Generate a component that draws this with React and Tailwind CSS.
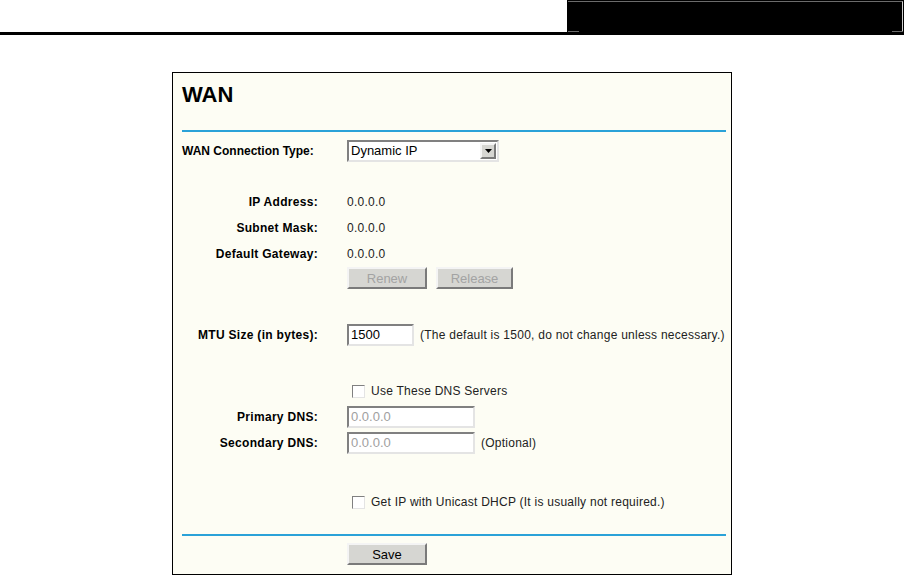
import React from 'react'

const inset =
  'border-2 border-t-[#808080] border-l-[#808080] border-r-[#e4e4e4] border-b-[#e4e4e4] bg-white'

const Label = ({ children, left = false }) => (
  <div
    className={`w-[136px] shrink-0 whitespace-nowrap font-bold text-black ${
      left ? 'text-left tracking-normal' : 'text-right tracking-[0.3px]'
    }`}
  >
    {children}
  </div>
)

const Row = ({ label, left, children, className = 'h-[26px]' }) => (
  <div className={`flex items-center ${className}`}>
    <Label left={left}>{label}</Label>
    <div className="ml-[29px] flex items-center">{children}</div>
  </div>
)

const Button = ({ children, disabled, width }) => (
  <button
    type="button"
    className={`h-[22px] ${width} border-2 border-t-[#f4f4f4] border-l-[#f4f4f4] border-r-[#7a7a7a] border-b-[#7a7a7a] bg-[#d6d6d2] text-[13px] tracking-normal leading-none ${
      disabled ? 'text-[#a3a3a3]' : 'text-black'
    }`}
  >
    {children}
  </button>
)

const Checkbox = ({ label }) => (
  <div className="flex items-center pl-[5px]">
    <span className={`w-[13px] h-[13px] ${inset} border-[1.5px]`} />
    <span className="ml-[6px] text-[#222]">{label}</span>
  </div>
)

const TextBox = ({ value, width, disabled }) => (
  <div
    className={`${inset} h-[22px] ${width} flex items-center pl-[2px] text-[13px] tracking-normal ${
      disabled ? 'text-[#a0a0a0]' : 'text-black'
    }`}
  >
    {value}
  </div>
)

export default function App() {
  return (
    <div className="w-[904px] h-[576px] bg-white font-['Liberation_Sans',Arial,sans-serif] text-[12px] tracking-[0.25px] text-[#222] overflow-hidden">
      <header className="flex h-[35px]">
        <div className="flex-1 flex flex-col justify-end">
          <div className="h-[3px] bg-black" />
        </div>
        <div className="w-[337px] bg-black relative">
          <div className="absolute top-[1px] left-[1px] right-[1px] h-[31px] border-t border-r border-t-[#6b6b6b] border-r-[#d0d0d0]" />
          <div className="absolute top-[31px] left-[1px] w-[11px] h-px bg-[#6b6b6b]" />
          <div className="absolute top-[31px] right-[1px] w-[11px] h-px bg-[#6b6b6b]" />
        </div>
      </header>

      <main className="flex justify-center pt-[37px]">
        <section className="w-[560px] h-[503px] border border-black bg-[#fdfdf4] pl-[9px] pr-[5px]">
          <h1 className="pt-[9px] h-[57px] text-[22px] leading-[26px] font-bold tracking-normal text-black">WAN</h1>
          <div className="h-[2px] bg-[#2aa2d8]" />

          <Row label="WAN Connection Type:" left className="h-[26px] mt-[6px]">
            <div
              className={`${inset} h-[22px] w-[152px] flex items-center justify-between pl-[2px] pr-[1px] text-[13px] tracking-normal text-black`}
            >
              <span>Dynamic IP</span>
              <span className="w-[16px] h-[16px] border-2 border-t-[#f4f4f4] border-l-[#f4f4f4] border-r-[#7a7a7a] border-b-[#7a7a7a] bg-[#d6d6d2] flex items-center justify-center">
                <svg width="7" height="4" viewBox="0 0 7 4">
                  <path d="M0 0h7L3.5 4z" fill="#000" />
                </svg>
              </span>
            </div>
          </Row>

          <div className="h-[25px]" />
          <Row label="IP Address:">0.0.0.0</Row>
          <Row label="Subnet Mask:">0.0.0.0</Row>
          <Row label="Default Gateway:">0.0.0.0</Row>
          <Row label="" className="h-[22px]">
            <Button disabled width="w-[80px]">Renew</Button>
            <span className="w-[9px]" />
            <Button disabled width="w-[77px]">Release</Button>
          </Row>

          <div className="h-[33px]" />
          <Row label="MTU Size (in bytes):">
            <TextBox value="1500" width="w-[67px]" />
            <span className="ml-[6px]">(The default is 1500, do not change unless necessary.)</span>
          </Row>

          <div className="h-[30px]" />
          <Row label="">
            <Checkbox label="Use These DNS Servers" />
          </Row>
          <Row label="Primary DNS:">
            <TextBox value="0.0.0.0" width="w-[128px]" disabled />
          </Row>
          <Row label="Secondary DNS:">
            <TextBox value="0.0.0.0" width="w-[128px]" disabled />
            <span className="ml-[6px]">(Optional)</span>
          </Row>

          <div className="h-[33px]" />
          <Row label="">
            <Checkbox label="Get IP with Unicast DHCP (It is usually not required.)" />
          </Row>

          <div className="h-[19px]" />
          <div className="h-[2px] bg-[#2aa2d8]" />
          <Row label="" className="h-[22px] mt-[7px]">
            <Button width="w-[80px]">Save</Button>
          </Row>
        </section>
      </main>
    </div>
  )
}
